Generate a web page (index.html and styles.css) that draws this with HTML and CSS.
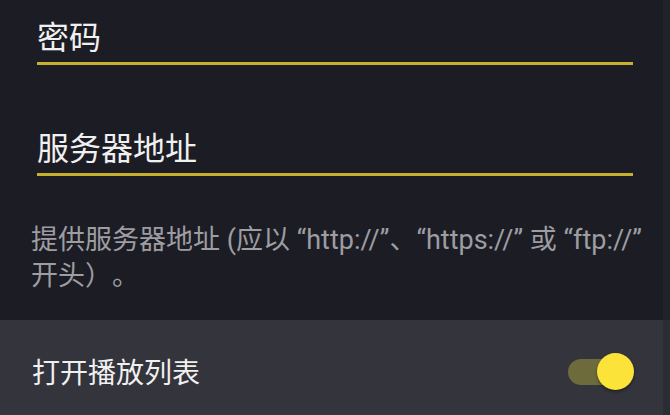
FILE: index.html
```html
<!DOCTYPE html>
<html lang="zh-CN">
<head>
  <meta charset="UTF-8" />
  <meta name="viewport" content="width=device-width, initial-scale=1.0" />
  <title>服务器设置</title>
  <link rel="stylesheet" href="styles.css">
</head>
<body>

  <div class="login-form">
    <div class="field">
      <div class="field-label">密码</div>
    </div>

    <div class="field">
      <div class="field-label">服务器地址</div>
    </div>

    <p class="helper">提供服务器地址 (应以 “http://”、“https://” 或 “ftp://” 开头）。</p>
  </div>

  <div class="setting-row">
    <span class="setting-title">打开播放列表</span>
    <span class="switch on"></span>
  </div>

</body>
</html>
```

FILE: styles.css
```css
html, body {
  margin: 0;
  height: 100%;
  overflow: hidden;
}
body {
  font-family: Roboto, "Noto Sans CJK SC", sans-serif;
  background-color: #1c1c24;
  color: #f0f0f0;
}
.login-form {
  padding: 18px 0 26px;
  border-right: 7px solid #22222a;
}
.field {
  padding: 0 30px 0 37px;
}
.field + .field {
  margin-top: 64px;
}
.field-label {
  font-size: 32px;
  line-height: 40px;
  padding-bottom: 4px;
  border-bottom: 3px solid #c6b02d;
}
.helper {
  margin: 46px 0 0;
  padding-left: 31px;
  font-size: 27px;
  line-height: 36px;
  color: #9d9da2;
  text-spacing-trim: space-all;
}
.setting-row {
  display: flex;
  align-items: center;
  justify-content: space-between;
  height: 102px;
  padding: 0 29px 0 32px;
  background-color: #33343c;
  border-right: 7px solid #2c2d34;
}
.setting-title {
  font-size: 28px;
}
.switch {
  position: relative;
  width: 66px;
  height: 37px;
}
.switch::before {
  content: "";
  position: absolute;
  left: 0;
  top: 6px;
  width: 62px;
  height: 26px;
  border-radius: 13px;
  background-color: #6d6a3b;
}
.switch::after {
  content: "";
  position: absolute;
  right: 0;
  top: 0;
  width: 37px;
  height: 37px;
  border-radius: 50%;
  background-color: #fbe33a;
  box-shadow: 0 2px 3px rgba(0, 0, 0, 0.35);
}
```
